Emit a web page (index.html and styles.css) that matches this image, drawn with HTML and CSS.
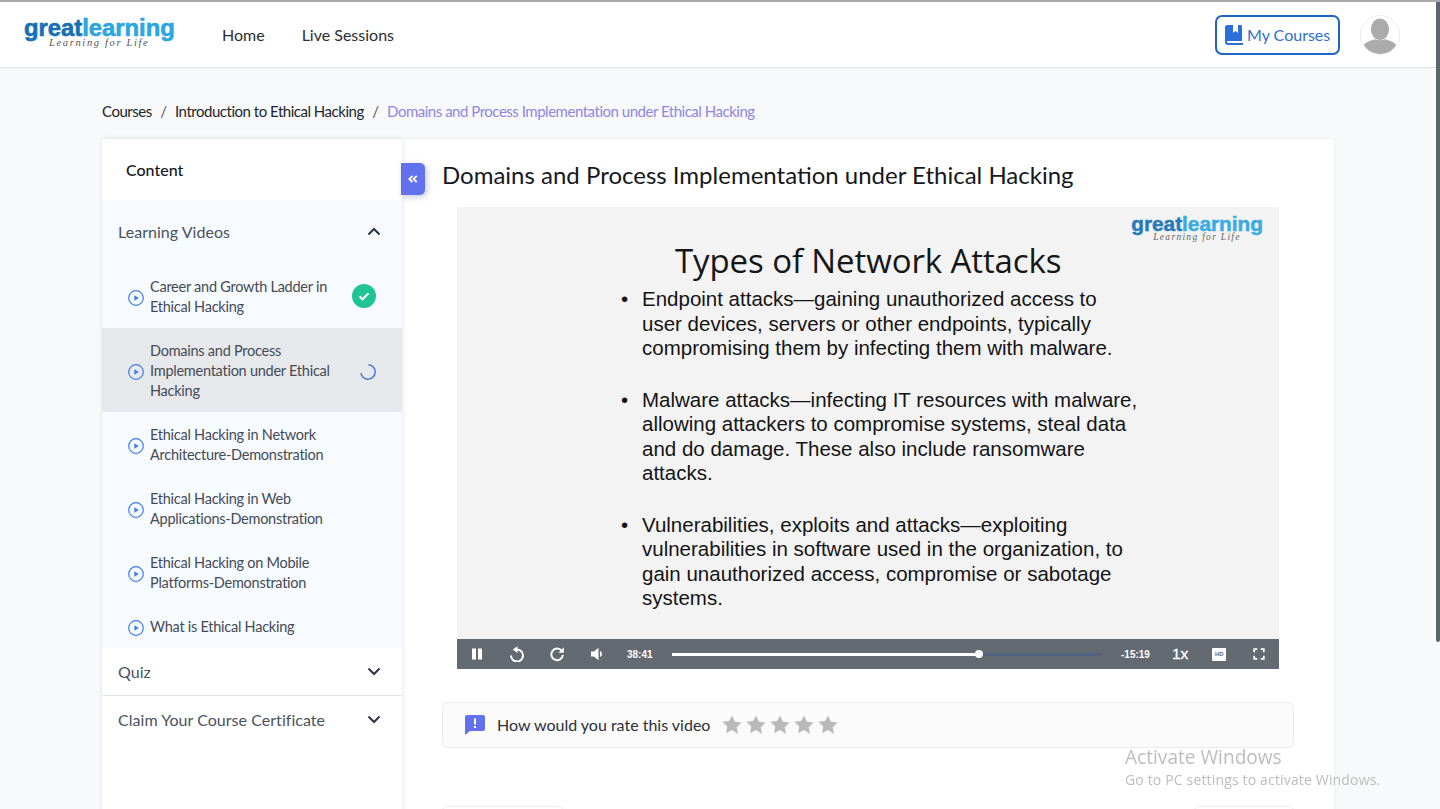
FILE: index.html
```html
<!DOCTYPE html>
<html lang="en">
<head>
<meta charset="utf-8">
<title>Domains and Process Implementation under Ethical Hacking</title>
<link rel="stylesheet" href="styles.css">
</head>
<body>
<header class="topbar">
  <a class="logo">
    <span class="logo-word"><span class="dark">great</span><span class="light">learning</span></span>
    <span class="logo-tag">Learning for Life</span>
  </a>
  <nav class="nav"><a>Home</a><a>Live Sessions</a></nav>
  <a class="my-courses">
    <svg class="book" viewBox="0 0 18 20"><path d="M2.6 0H8v8l2.5-2 2.5 2V0h2.6c.8 0 1.4.6 1.4 1.400V16H3a1 1 0 0 0 0 2h15v2H3a3 3 0 0 1-3-3V2.600A2.600 2.600 0 0 1 2.600 0z" fill="#2b6fd8"/></svg>
    My Courses
  </a>
  <div class="avatar">
    <svg viewBox="0 0 40 40"><ellipse cx="20" cy="14" rx="9.500" ry="11.500" fill="#ababab"/><path d="M2 40v-7c1-5 7-7 13-8.500 3 1.500 7 1.500 10 0 6 1.500 12 3.500 13 8.500v7z" fill="#ababab"/></svg>
  </div>
</header>

<main class="page">
  <div class="crumbs">
    <span>Courses</span><i>/</i><span>Introduction to Ethical Hacking</span><i>/</i><span class="here">Domains and Process Implementation under Ethical Hacking</span>
  </div>

  <section class="card">
    <aside class="side">
      <div class="side-title">Content</div>
      <div class="group open">
        <div class="group-head">
          <span>Learning Videos</span>
          <svg class="chev" viewBox="0 0 14 9"><path d="M1.500 7.500 7 2l5.500 5.500" /></svg>
        </div>
        <ul class="lessons">
          <li class="lesson"><svg class="play" viewBox="0 0 16 16"><circle cx="8" cy="8" r="7.300"/><path d="M6.300 5.200v5.600L10.800 8z"/></svg><span>Career and Growth Ladder in Ethical Hacking</span>
            <svg class="done" viewBox="0 0 24 24"><circle cx="12" cy="12" r="12"/><path d="m7.500 12.300 3 3 6-6"/></svg></li>
          <li class="lesson current"><svg class="play" viewBox="0 0 16 16"><circle cx="8" cy="8" r="7.300"/><path d="M6.300 5.200v5.600L10.800 8z"/></svg><span>Domains and Process Implementation under Ethical Hacking</span>
            <svg class="spin" viewBox="0 0 16 16"><path d="M8.500 .8A7.200 7.200 0 1 1 .9 9.200"/></svg></li>
          <li class="lesson"><svg class="play" viewBox="0 0 16 16"><circle cx="8" cy="8" r="7.300"/><path d="M6.300 5.200v5.600L10.800 8z"/></svg><span>Ethical Hacking in Network Architecture-Demonstration</span></li>
          <li class="lesson"><svg class="play" viewBox="0 0 16 16"><circle cx="8" cy="8" r="7.300"/><path d="M6.300 5.200v5.600L10.800 8z"/></svg><span>Ethical Hacking in Web Applications-Demonstration</span></li>
          <li class="lesson"><svg class="play" viewBox="0 0 16 16"><circle cx="8" cy="8" r="7.300"/><path d="M6.300 5.200v5.600L10.800 8z"/></svg><span>Ethical Hacking on Mobile Platforms-Demonstration</span></li>
          <li class="lesson single"><svg class="play" viewBox="0 0 16 16"><circle cx="8" cy="8" r="7.300"/><path d="M6.300 5.200v5.600L10.800 8z"/></svg><span>What is Ethical Hacking</span></li>
        </ul>
      </div>
      <div class="group closed">
        <div class="group-head"><span>Quiz</span><svg class="chev" viewBox="0 0 14 9"><path d="M1.500 1.500 7 7l5.500-5.500"/></svg></div>
      </div>
      <div class="group closed">
        <div class="group-head"><span>Claim Your Course Certificate</span><svg class="chev" viewBox="0 0 14 9"><path d="M1.500 1.500 7 7l5.500-5.500"/></svg></div>
      </div>
      <button class="collapse" aria-label="Collapse"><svg viewBox="0 0 10 8"><path d="M4.500 .8 1.300 4l3.200 3.200M8.700 .8 5.500 4l3.200 3.200"/></svg></button>
    </aside>

    <div class="content">
      <h1>Domains and Process Implementation under Ethical Hacking</h1>
      <div class="player">
        <div class="slide">
          <div class="slide-logo">
            <span class="logo-word"><span class="dark">great</span><span class="light">learning</span></span>
            <span class="logo-tag">Learning for Life</span>
          </div>
          <h2>Types of Network Attacks</h2>
          <ul class="points">
            <li>Endpoint attacks—gaining unauthorized access to<br>user devices, servers or other endpoints, typically<br>compromising them by infecting them with malware.</li>
            <li>Malware attacks—infecting IT resources with malware,<br>allowing attackers to compromise systems, steal data<br>and do damage. These also include ransomware<br>attacks.</li>
            <li>Vulnerabilities, exploits and attacks—exploiting<br>vulnerabilities in software used in the organization, to<br>gain unauthorized access, compromise or sabotage<br>systems.</li>
          </ul>
        </div>
        <div class="controls">
          <svg class="ctl" viewBox="0 0 16 16"><path d="M3 2.500h4v11H3zM9 2.500h4v11H9z" fill="#fff"/></svg>
          <svg class="ctl stroke" viewBox="0 0 16 16"><path d="M7.500 3.600A6 6 0 1 1 2 9.500"/><path d="M8.500 .2 3.800 3.600l4.700 3.400z" class="head"/></svg>
          <svg class="ctl stroke" viewBox="0 0 16 16"><path d="M13 5.200A5.800 5.800 0 1 0 13.900 9"/><path d="M14.800 1.300v5.500H9.300z" class="head"/></svg>
          <svg class="ctl" viewBox="0 0 16 16"><path d="M2 5.500h3L9.500 1.800v12.400L5 10.500H2z" fill="#fff"/><path d="M11 5a3.200 3.200 0 0 1 0 6z" fill="#fff"/></svg>
          <span class="time">38:41</span>
          <div class="track"><div class="played" style="width:71.600%"></div><div class="knob" style="left:71.600%"></div></div>
          <span class="time remain">-15:19</span>
          <span class="speed">1x</span>
          <span class="hd">HD</span>
          <svg class="ctl stroke full" viewBox="0 0 16 16"><path d="M2.500 6V2.500H6M10 2.500h3.500V6M13.500 10v3.500H10M6 13.500H2.500V10"/></svg>
        </div>
      </div>
      <div class="rate">
        <svg class="rate-ico" viewBox="0 0 20 20"><path d="M2 0h16a2 2 0 0 1 2 2v12a2 2 0 0 1-2 2H5l-5 4V2a2 2 0 0 1 2-2z" fill="#6271ee"/><path d="M9 3.500h2v6H9zM9 11h2v2H9z" fill="#fff"/></svg>
        <span>How would you rate this video</span>
        <div class="stars">
          <svg viewBox="0 0 20 20"><path d="m10 .5 2.900 6.300 6.800.8-5 4.700 1.300 6.800L10 15l-6 3.300 1.300-6.800-5-4.700 6.800-.8z"/></svg>
          <svg viewBox="0 0 20 20"><path d="m10 .5 2.900 6.300 6.800.8-5 4.700 1.300 6.800L10 15l-6 3.300 1.300-6.800-5-4.700 6.800-.8z"/></svg>
          <svg viewBox="0 0 20 20"><path d="m10 .5 2.900 6.300 6.800.8-5 4.700 1.300 6.800L10 15l-6 3.300 1.300-6.800-5-4.700 6.800-.8z"/></svg>
          <svg viewBox="0 0 20 20"><path d="m10 .5 2.900 6.300 6.800.8-5 4.700 1.300 6.800L10 15l-6 3.300 1.300-6.800-5-4.700 6.800-.8z"/></svg>
          <svg viewBox="0 0 20 20"><path d="m10 .5 2.900 6.300 6.800.8-5 4.700 1.300 6.800L10 15l-6 3.300 1.300-6.800-5-4.700 6.800-.8z"/></svg>
        </div>
      </div>
      <div class="below"><span class="tab"></span><span class="tab short"></span></div>
    </div>
  </section>
</main>

<div class="scroll-thumb"></div>
<div class="activate">
  <div class="a1">Activate Windows</div>
  <div class="a2">Go to PC settings to activate Windows.</div>
</div>
</body>
</html>
```

FILE: styles.css
```css
* { box-sizing: border-box; }
html, body { margin: 0; height: 809px; overflow: hidden; }
body { background: #f8f9fb; font-family: Lato, sans-serif; color: #1f2329; border-top: 2px solid #a9a9a9; }

.topbar { height: 66px; background: #fff; border-bottom: 1px solid #dfe1e4; display: flex; align-items: center; padding: 0 40px 0 24px; }
.logo { display: flex; flex-direction: column; width: 150px; margin-top: -4px; }
.logo-word { font: 700 23.800px/22px "Liberation Sans", sans-serif; -webkit-text-stroke: .6px; white-space: nowrap; }
.dark { color: #1670b5; }
.light { color: #2ba6e1; }
.logo-tag { font: italic 400 10.500px/10px "Liberation Serif", serif; letter-spacing: 1.650px; color: #555; margin: -1px 0 0 25px; white-space: nowrap; }
.nav { display: flex; gap: 37px; margin-left: 48px; font-size: 16px; color: #2a2e33; }
.my-courses { margin-left: auto; width: 125px; height: 40px; border: 2px solid #1f66c4; border-radius: 7px; display: flex; align-items: center; gap: 4px; padding-left: 8px; font-size: 16px; color: #2f6fce; }
.book { width: 18px; height: 20px; }
.avatar { width: 40px; height: 40px; margin-left: 20px; border-radius: 50%; border: 1px solid #ececec; overflow: hidden; background: #fff; }
.avatar svg { width: 38px; height: 38px; display: block; }

.page { padding: 0 106px 0 102px; }
.crumbs { height: 71px; display: flex; align-items: center; font-size: 15px; letter-spacing: -.48px; color: #22262a; padding-top: 15px; }
.crumbs i { font-style: normal; margin: 0 8.500px; color: #555; }
.here { color: #9085e4; }

.card { display: flex; background: #fff; border-radius: 4px; height: 700px; box-shadow: 0 0 4px rgba(40,50,70,.06); }
.side { position: relative; width: 300px; flex: none; box-shadow: 1px 0 5px rgba(40,50,70,.10); background: #fff; }
.side-title { height: 61px; padding: 0 24px; display: flex; align-items: center; font-size: 16px; font-weight: 500; color: #15181c; }
.group-head { display: flex; justify-content: space-between; align-items: center; padding: 0 21px 0 16px; font-size: 16px; letter-spacing: .04px; color: #4a5261; }
.open { background: #f7fafe; }
.open .group-head { height: 64px; padding-bottom: 2px; }
.closed .group-head { height: 47px; }
.closed { border-bottom: 1px solid #e3e4e7; }
.closed + .closed { border-bottom: 0; }
.chev { width: 14px; height: 9px; fill: none; stroke: #2c3547; stroke-width: 2; }
.lessons { list-style: none; margin: 0; padding: 0; }
.lesson { display: flex; align-items: center; min-height: 64px; padding: 2px 26px 0 26px; font-size: 14.500px; line-height: 20px; letter-spacing: -.25px; color: #444b55; position: relative; }
.lesson span { width: 190px; }
.current { background: #e6e8ec; min-height: 84px; }
.single { min-height: 44px; }
.play { width: 16px; height: 16px; flex: none; margin-right: 6px; margin-top: 2px; }
.play circle { fill: none; stroke: #3f7fe0; stroke-width: 1.200; }
.play path { fill: #3f7fe0; }
.done { position: absolute; right: 26px; top: 20px; width: 24px; height: 24px; }
.done circle { fill: #1fc494; }
.done path { fill: none; stroke: #fff; stroke-width: 2; }
.spin { position: absolute; right: 26px; top: 36px; width: 16px; height: 16px; fill: none; stroke: #3f6fd8; stroke-width: 1.400; }
.collapse { position: absolute; left: 299px; top: 24px; width: 24px; height: 32px; padding: 0; border: 0; background: #6271ee; border-radius: 0 5px 5px 0; box-shadow: 2px 2px 6px rgba(40,50,90,.25); display: flex; align-items: center; justify-content: center; }
.collapse svg { width: 10px; height: 8px; fill: none; stroke: #fff; stroke-width: 1.800; }

.content { flex: 1; padding: 0 40px; min-width: 0; }
h1 { margin: 0; font-size: 24px; font-weight: 400; line-height: 29px; padding-top: 21px; color: #15181c; }
.player { width: 822px; margin: 18px 0 0 15px; }
.slide { position: relative; height: 432px; background: #f3f3f4; color: #111; font-family: "Liberation Sans", sans-serif; overflow: hidden; padding: 34px 0 0 0; }
.slide-logo { position: absolute; right: 16px; top: 7px; display: flex; flex-direction: column; opacity: .92; }
.slide-logo .logo-word { font-size: 20.800px; line-height: 20px; -webkit-text-stroke: .5px; }
.slide-logo .logo-tag { font-size: 9.500px; line-height: 9px; margin: -1px 0 0 22px; letter-spacing: 1.300px; }
h2 { margin: 0; font: 400 33px/40px "Open Sans", sans-serif; letter-spacing: -.1px; padding-left: 218px; color: #161616; }
.points { margin: 0; padding: 0 0 0 185px; list-style: none; font-size: 20.500px; line-height: 24.500px; color: #141414; margin-top: 6px; }
.points li { margin-bottom: 27px; position: relative; white-space: nowrap; }
.points li::before { content: "•"; position: absolute; left: -21px; }
.controls { height: 30px; background: #646a72; display: flex; align-items: center; padding: 0 13px 0 12px; color: #fff; }
.ctl { width: 16px; height: 16px; flex: none; margin-right: 24px; }
.stroke { fill: none; stroke: #fff; stroke-width: 2; }
.head { fill: #fff; stroke: none; }
.time { font: 700 10px "Liberation Sans", sans-serif; width: 34px; flex: none; margin-left: -2px; }
.track { position: relative; width: 429px; height: 3px; background: #50627f; margin-left: 11px; border-radius: 2px; flex: none; }
.played { height: 3px; background: #fff; }
.knob { position: absolute; top: -2.500px; width: 8px; height: 8px; margin-left: -4px; border-radius: 50%; background: #fff; }
.remain { margin-left: 20px; width: 36px; }
.speed { font: 400 15.500px "Liberation Sans", sans-serif; -webkit-text-stroke: .3px; margin-left: 15px; width: 18px; }
.hd { width: 14px; height: 13px; background: #fff; color: #646a72; font: 700 6px/13px "Liberation Sans", sans-serif; text-align: center; margin-left: 23px; border-radius: 1px; }
.full { width: 14px; height: 14px; margin: 0 0 0 26px; }

.rate { display: flex; align-items: center; height: 46px; width: 852px; margin-top: 33px; background: #fbfbfc; border: 1px solid #ebecee; border-radius: 5px; padding-left: 22px; font-size: 16px; color: #2b2f36; }
.rate > span { margin-top: -2px; }
.rate-ico { width: 20px; height: 20px; margin-right: 12px; }
.stars { display: flex; gap: 4px; margin-left: 12px; }
.stars svg { width: 20px; height: 20px; fill: #b9b9b9; }
.below { display: flex; justify-content: space-between; width: 852px; margin-top: 58px; }
.tab { width: 122px; height: 8px; background: #fff; border: 1px solid #eceded; border-radius: 5px 5px 0 0; }
.tab.short { width: 100px; }

.scroll-thumb { position: fixed; right: 0; top: 2px; width: 4px; height: 640px; background: #5b6470; border-radius: 0 0 2px 2px; }
.activate { position: fixed; left: 1125px; top: 745px; color: #bdbdbd; font-family: "Open Sans", sans-serif; pointer-events: none; }
.a1 { font-size: 19.100px; line-height: 24px; }
.a2 { font-size: 14px; line-height: 20px; letter-spacing: .16px; margin-top: 1px; white-space: nowrap; }
```
